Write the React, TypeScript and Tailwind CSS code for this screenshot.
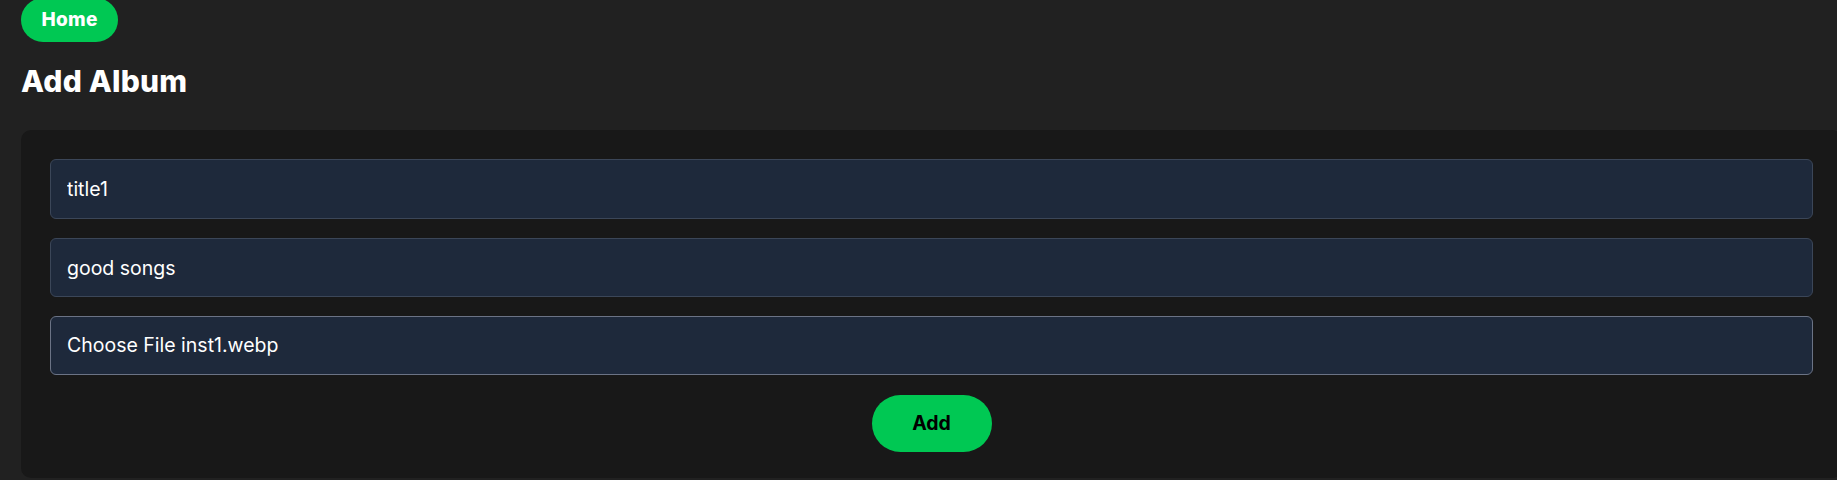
import { useState } from 'react';

export default function App() {
  const [title, setTitle] = useState('title1');
  const [desc, setDesc] = useState('good songs');

  return (
    <div className="min-h-screen bg-[#212121] text-white font-['Inter',_'Liberation_Sans',_sans-serif] overflow-hidden">
      <div className="pl-[21px] -mt-[2px]">
        {/* Nav */}
        <button className="h-[44px] w-[97px] rounded-full bg-[#00c853] text-white font-extrabold text-[19px] tracking-[0.3px]">
          Home
        </button>

        <h1 className="mt-[21px] text-[30px] font-extrabold leading-[36px] tracking-[0.2px]">Add Album</h1>

        {/* Form card */}
        <form className="mt-[31px] w-[1821px] rounded-[10px] bg-[#181818] px-[29px] pt-[29px] pb-[26px] flex flex-col gap-[19px]">
          <input
            value={title}
            onChange={(e) => setTitle(e.target.value)}
            className="h-[60px] w-full rounded-md border border-[#3b4658] bg-[#1e293b] px-4 text-[19.5px] text-white outline-none"
          />
          <input
            value={desc}
            onChange={(e) => setDesc(e.target.value)}
            className="h-[59px] w-full rounded-md border border-[#3b4658] bg-[#1e293b] px-4 text-[19.5px] text-white outline-none"
          />
          <div className="h-[59px] w-full rounded-md border border-[#6b7385] bg-[#1e293b] px-4 text-[19.5px] flex items-center">
            Choose File inst1.webp
          </div>
          <div className="flex justify-center mt-[1px]">
            <button type="button" className="h-[57px] w-[120px] rounded-full bg-[#00c853] text-black font-bold text-[19.5px]">
              Add
            </button>
          </div>
        </form>
      </div>
    </div>
  );
}
